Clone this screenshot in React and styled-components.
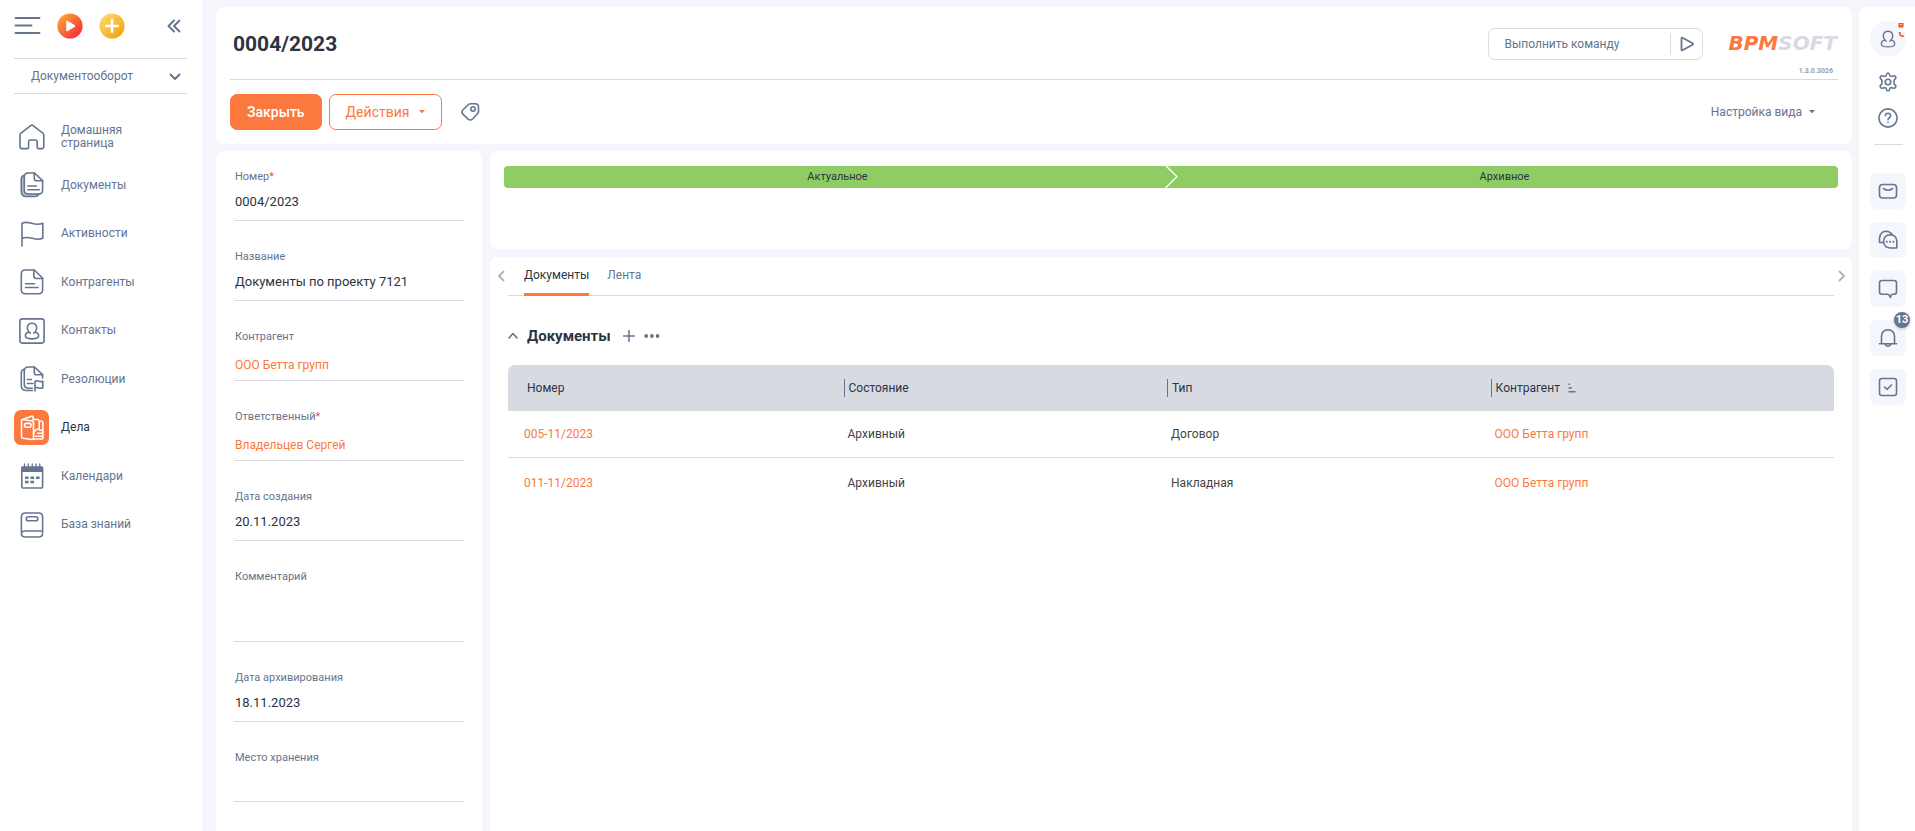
import { useState } from 'react';
import styled, { createGlobalStyle, css } from 'styled-components';

const colors = {
    page: '#f5f6fb',
    line: '#d8dae2',
    muted: '#66748f',
    text: '#2b3442',
    accent: '#fb793e',
    stage: '#8fcc63',
};

const GlobalStyle = createGlobalStyle`
    * {
        box-sizing: border-box;
    }
    body {
        margin: 0;
        background: ${colors.page};
        color: ${colors.text};
        font-family: Roboto, "Noto Sans", sans-serif;
        font-size: 12px;
        line-height: 16px;
    }
    button, input, select, textarea {
        margin: 0;
        padding: 0;
        border: 0;
        background: none;
        color: inherit;
        font: inherit;
    }
    button {
        cursor: pointer;
    }
    a {
        color: ${colors.accent};
        text-decoration: none;
    }
    svg {
        display: block;
        flex: none;
    }
`;

const Page = styled.div`
    display: flex;
    min-height: 100vh;
`;

/* ---------- left menu ---------- */

const Sidebar = styled.aside`
    flex: none;
    width: 202px;
    padding: 13px 15px 0 14px;
    background: #fff;
    color: ${colors.muted};
`;

const SidebarTop = styled.div`
    display: flex;
    align-items: center;
    gap: 16px;
    height: 26px;
    margin-bottom: 19px;

    button:last-child {
        margin-left: auto;
        margin-right: 6px;
    }
`;

const IconButton = styled.button`
    display: flex;
    align-items: center;
    justify-content: center;
    color: ${colors.muted};
`;

const Workplace = styled.label`
    position: relative;
    display: block;
    border-top: 1px solid ${colors.line};
    border-bottom: 1px solid ${colors.line};

    select {
        appearance: none;
        display: block;
        width: 100%;
        height: 34px;
        padding-left: 17px;
        outline: none;
    }
    svg {
        position: absolute;
        right: 6px;
        top: 14px;
        pointer-events: none;
    }
`;

const Menu = styled.nav`
    display: flex;
    flex-direction: column;
    justify-content: space-between;
    height: 423px;
    margin-top: 25px;
`;

const MenuLink = styled.a`
    display: flex;
    align-items: center;
    gap: 12px;
    height: 35px;
    color: ${({ $active }) => ($active ? colors.text : colors.muted)};
    line-height: 13px;
`;

const MenuIcon = styled.span`
    display: flex;
    align-items: center;
    justify-content: center;
    flex: none;
    width: 35px;
    height: 35px;
    border-radius: 7px;
    ${({ $active }) => $active && css`
        background: ${colors.accent};
        color: #fff;
    `}
`;

const MenuText = styled.span`
    max-width: 80px;
`;

/* ---------- content ---------- */

const Main = styled.main`
    display: flex;
    flex-direction: column;
    flex: 1;
    min-width: 0;
    gap: 7px;
    padding: 7px 7px 0 14px;
`;

const Panel = styled.section`
    background: #fff;
    border-radius: ${({ $toBottom }) => ($toBottom ? '7px 7px 0 0' : '7px')};
`;

const HeaderPanel = styled(Panel)`
    padding: 0 14px 14px;
`;

const HeaderTop = styled.div`
    display: flex;
    align-items: center;
    height: 73px;
    padding-top: 1px;
    border-bottom: 1px solid ${colors.line};
`;

const Title = styled.h1`
    flex: 1;
    margin: 0 0 0 3px;
    font-size: 21px;
    line-height: 28px;
    font-weight: 700;
`;

const Command = styled.div`
    display: flex;
    align-items: center;
    width: 215px;
    height: 32px;
    margin-right: 25px;
    border: 1px solid ${colors.line};
    border-radius: 7px;

    input {
        flex: 1;
        min-width: 0;
        height: 22px;
        padding-left: 15px;
        border-right: 1px solid ${colors.line};
        color: ${colors.muted};
        outline: none;
    }
    input::placeholder {
        color: ${colors.muted};
        opacity: 1;
    }
    button {
        width: 31px;
        height: 30px;
    }
`;

const Brand = styled.div`
    display: flex;
    flex-direction: column;
    align-items: flex-end;
    align-self: stretch;
    justify-content: flex-end;
    gap: 13px;
    padding-bottom: 3px;
`;

const Logo = styled.div`
    padding-right: 1px;
    color: ${colors.line};
    font: italic bold 20px/20px "DejaVu Sans", sans-serif;

    span {
        color: ${colors.accent};
    }
`;

const Version = styled.small`
    padding-right: 5px;
    color: #9a9eae;
    font-size: 7px;
    font-weight: 700;
    line-height: 10px;
`;

const Actions = styled.div`
    display: flex;
    align-items: center;
    gap: 7px;
    padding-top: 14px;
`;

const ActionButton = styled.button`
    display: flex;
    align-items: center;
    gap: 10px;
    height: 36px;
    padding: 0 16px;
    border: 1px solid ${colors.accent};
    border-radius: 7px;
    background: ${({ $primary }) => ($primary ? colors.accent : '#fff')};
    color: ${({ $primary }) => ($primary ? '#fff' : colors.accent)};
    font-size: 14px;
    font-weight: ${({ $primary }) => ($primary ? 500 : 400)};
`;

const TagButton = styled(IconButton)`
    width: 36px;
    height: 36px;
    margin-left: 3px;
`;

const ViewButton = styled.button`
    display: flex;
    align-items: center;
    gap: 7px;
    margin-left: auto;
    margin-right: 23px;
    color: ${colors.muted};
`;

const Columns = styled.div`
    display: flex;
    flex: 1;
    gap: 8px;
`;

const CardPanel = styled(Panel)`
    display: flex;
    flex-direction: column;
    flex: none;
    gap: 27px;
    width: 266px;
    padding: 17px 18px 28px;
`;

const Field = styled.div`
    display: flex;
    flex-direction: column;
    border-bottom: 1px solid ${colors.line};

    label, > span {
        padding-left: 1px;
        color: ${colors.muted};
        font-size: 11px;
        line-height: 18px;
    }
    sup {
        color: #f0533a;
        font-size: 11px;
        line-height: 1;
        vertical-align: baseline;
    }
    input {
        width: 100%;
        height: 34px;
        padding: 0 1px 4px;
        font-size: 13px;
        outline: none;
    }
    textarea {
        width: 100%;
        height: 55px;
        padding: 8px 1px;
        font-size: 13px;
        resize: none;
        outline: none;
    }
    a {
        height: 34px;
        padding: 11px 1px 0;
    }
`;

const Right = styled.div`
    display: flex;
    flex-direction: column;
    flex: 1;
    min-width: 0;
    gap: 8px;
`;

const StagePanel = styled(Panel)`
    min-height: 98px;
    padding: 15px 14px;
`;

const Stages = styled.ol`
    display: flex;
    margin: 0;
    padding: 0;
    overflow: hidden;
    border-radius: 4px;
    background: ${colors.stage};
    list-style: none;
`;

const Stage = styled.li`
    position: relative;
    flex: 1;
    font-size: 11px;
    line-height: 22px;
    text-align: center;

    /* arrow head lies over the border of two stages */
    svg {
        position: absolute;
        top: 0;
        right: -7px;
        z-index: 1;
    }
`;

const DetailPanel = styled(Panel)`
    flex: 1;
    padding-bottom: 24px;
`;

const TabsRow = styled.div`
    display: flex;
    align-items: flex-start;
    justify-content: space-between;

    > button {
        flex: none;
        width: 18px;
        height: 37px;
        color: #b4b4b8;
    }
    > button:first-child {
        padding-left: 4px;
    }
    > button:last-child {
        padding-right: 2px;
    }
`;

const Tabs = styled.div`
    display: flex;
    flex: 1;
    gap: 18px;
    height: 39px;
    padding-left: 16px;
    border-bottom: 1px solid ${colors.line};
`;

const Tab = styled.button`
    height: 39px;
    border-bottom: 3px solid ${({ $active }) => ($active ? colors.accent : 'transparent')};
    color: ${({ $active }) => ($active ? colors.text : colors.muted)};
`;

const Detail = styled.div`
    padding: 28px 18px 0;
`;

const DetailHead = styled.div`
    display: flex;
    align-items: center;
    height: 24px;
    margin-bottom: 17px;

    h2 {
        margin: 0 12px 0 9px;
        font-size: 15px;
        line-height: 24px;
        font-weight: 700;
    }
    button + button {
        margin-left: 9px;
    }
`;

const Table = styled.table`
    width: 100%;
    border-collapse: separate;
    border-spacing: 0;
    table-layout: fixed;

    col {
        width: 24.4%;
    }
    col:last-child {
        width: auto;
    }
    th {
        height: 46px;
        padding: 0 0 0 12px;
        background: ${colors.line};
        font-weight: 400;
        text-align: left;
    }
    th:first-child {
        padding-left: 14px;
        border-top-left-radius: 7px;
    }
    th:last-child {
        border-top-right-radius: 7px;
    }
    td {
        height: 50px;
        padding: 0 16px;
        color: #444;
    }
    tr:not(:last-child) td {
        height: 47px;
        border-bottom: 1px solid ${colors.line};
    }
    svg {
        color: ${colors.muted};
    }
`;

const HeadCell = styled.span`
    display: flex;
    align-items: center;
    gap: 8px;
    height: 18px;
    padding-left: 4px;
    border-left: 1px solid ${({ $first }) => ($first ? 'transparent' : colors.muted)};
`;

/* ---------- right communication panel ---------- */

const CommPanel = styled.aside`
    display: flex;
    flex-direction: column;
    align-items: center;
    flex: none;
    width: 56px;
    margin-top: 7px;
    padding: 14px 0 0 2px;
    border-top-left-radius: 7px;
    background: #fff;
`;

const Avatar = styled(IconButton)`
    position: relative;
    width: 36px;
    height: 36px;
    margin-bottom: 15px;
    border-radius: 50%;
    background: ${colors.page};
`;

const Status = styled.span`
    position: absolute;
    top: 2px;
    right: 2px;
`;

const CommTool = styled(IconButton)`
    height: 20px;
    margin-bottom: 16px;
`;

const CommLine = styled.hr`
    width: 29px;
    margin: 0 0 28px;
    border: 0;
    border-top: 1px solid ${colors.line};
`;

const CommList = styled.div`
    display: flex;
    flex-direction: column;
    gap: 13px;
`;

const CommButton = styled(IconButton)`
    position: relative;
    width: 36px;
    height: 36px;
    border-radius: 7px;
    background: ${colors.page};
`;

const Badge = styled.span`
    position: absolute;
    top: -8px;
    right: -4px;
    width: 16px;
    height: 16px;
    border-radius: 50%;
    background: ${colors.muted};
    box-shadow: 0 1px 3px #0000003a;
    color: #fff;
    font-size: 11px;
    font-weight: 700;
    line-height: 15px;
    text-align: center;
`;

/* ---------- icons ---------- */

const Svg = ({ w = 26, h = 26, sw = 1.6, children, ...rest }) => (
    <svg
        width={w}
        height={h}
        viewBox={`0 0 ${w} ${h}`}
        fill="none"
        stroke="currentColor"
        strokeWidth={sw}
        strokeLinecap="round"
        strokeLinejoin="round"
        aria-hidden="true"
        {...rest}
    >
        {children}
    </svg>
);

const Caret = () => (
    <Svg w={6} h={4} stroke="none" fill="currentColor">
        <path d="M0 0h6L3 3.2z" />
    </Svg>
);

const HomeIcon = () => (
    <Svg>
        <path d="M11.7 1.6a2 2 0 0 1 2.4 0l9.7 7.5q1 .8 1 2v11.500q0 2-2 2h-3.600q-1 0-1-1v-5.600q0-2-2-2h-4.600q-2 0-2 2v5.600q0 1-1 1H3q-2 0-2-2V11.100q0-1.200 1-2z" />
    </Svg>
);

const DocsIcon = () => (
    <Svg>
        <path d="M4.800 3.400Q2.400 4.400 2.400 7v12.500q0 5 5 5h8q3 0 4-2l-.8-1H9q-3.500 0-3.500-3.500V4z" fill="#b9c0cf" stroke="none" />
        <path d="M8 1h7.500L23.600 8.700V18q0 4-4 4H9.300q-4 0-4-4V5q0-4 4-4" />
        <path d="M15.300 1v5.500q0 2.300 2.300 2.300h6M5 3.300Q2.300 4.300 2.300 7v12.500q0 5 5 5h8.500q3 0 4-2.300M8.800 14h8.500M8.800 17.800h11.500" />
    </Svg>
);

const FlagIcon = () => (
    <Svg>
        <path d="M3 25V2.500q3-2 9.500-.3 6 2 11.300.1V17q-3.500 2.300-10.300.3Q7 15.700 3 17.300" />
    </Svg>
);

const DocIcon = () => (
    <Svg>
        <path d="M6.300 1h9l8.300 8v11.700q0 4-4 4H6.300q-4 0-4-4V5q0-4 4-4" />
        <path d="M14.800 1v5.800q0 2.700 2.700 2.700h6M6.500 14.700h9M6.500 18.500h12.500" />
    </Svg>
);

const Person = () => (
    <>
        <path d="M11.200 15.200C8.500 13 8 10.800 8.500 8.700 9 6.500 10.700 5.300 13 5.300s4 1.200 4.500 3.400c.5 2.100 0 4.300-2.700 6.500" />
        <path d="M9.500 14.200c-2 .6-3.300 2-3.100 4 .2 1.900 3.200 2.700 6.600 2.700s6.400-.8 6.600-2.700c.2-2-1.100-3.400-3.100-4" />
    </>
);

const ContactIcon = () => (
    <Svg>
        <rect x="0.900" y="0.900" width="24.200" height="24.200" rx="2.500" />
        <Person />
    </Svg>
);

const ResolutionIcon = () => (
    <Svg>
        <path d="M23.600 12V8.700L15.500 1H9.300q-4 0-4 4v13.500q0 3.500 4 3.700h4" />
        <path d="M15.300 1v5.500q0 2.300 2.300 2.300h6M5 3.300Q2.300 4.300 2.300 7v12.500q0 5 5 5h6M8.500 13.500h4M8.500 17.500h5.500" />
        <path d="M16 25v-9.800q2-1 4 0 2 .8 3.800 0v6.500q-1.800 1-3.800.2-2-.9-4 0" />
    </Svg>
);

const CaseIcon = () => (
    <Svg>
        <path d="M3.500 4.500 13 6q1.500.3 1.500 1.800V23q0 1.800-1.800 1.500L4 23.200q-1.500-.3-1.500-1.700V5.800q0-1.300 1-1.300z" />
        <path d="M4 4.300 12.500 1.200q1.700-.4 1.700 1.200V5M14.500 4.500h4q1.800.2 1.800 2v6.200q0 1.500-1.700 1.500-2.300 0-2.300 1.800M20.500 6h1.700q1.700.2 1.700 1.800v14.400q0 1.800-1.700 1.800h-7.500M15 16v2.500M20.500 15.200h3M18.500 18.200h5M16.500 21.200h7" />
        <rect x="5.500" y="8.400" width="6.500" height="3.800" rx="1.700" />
    </Svg>
);

const CalendarIcon = () => (
    <Svg>
        <rect x="2.800" y="4" width="20.800" height="21" rx="1" />
        <path d="M2.500 4h21.300v5H2.500z" fill="currentColor" stroke="none" />
        <path d="M5.500 1v3M9.300 1v3M13.200 1v3M17 1v3M20.800 1v3" strokeWidth="1.300" />
        <path d="M6 14.700h3.600M11.500 14.700h3.600M17 14.700h3.600M6 19h3.600M11.500 19h3.600" strokeWidth="2.600" strokeLinecap="butt" />
    </Svg>
);

const BookIcon = () => (
    <Svg>
        <path d="M23.600 20.500V5q0-4-4-4H6.400q-4 0-4 4v16.500q0 3.500 4 3.500h13.200q4 0 4-3.500M2.600 21q.6-2 3.400-2h17.500" />
        <rect x="7.300" y="4.800" width="11.500" height="4" rx="1.800" />
    </Svg>
);

const TagIcon = () => (
    <Svg w={20} h={20}>
        <path d="M8.500 2.500q1-.8 2.200-.8h4.300q3.500 0 3.500 3.500v4.200q0 1.200-.8 2.100l-4.900 5.300q-2.300 2.300-4.700.3l-5-4.800q-2.300-2.300 0-4.600z" />
        <circle cx="13" cy="7" r="2.200" />
    </Svg>
);

const GearIcon = () => (
    <Svg w={20} h={20}>
        <path d="M8.300 3q.2-2 1.700-2t1.700 2q.2 1.300 1.400 1.500l.9-.2q2.300-1.200 3.500.3.900 1.600-.9 2.900-.9.700-.6 1.600l.2.900-.2.900q-.3.900.6 1.600 1.800 1.300.9 2.900-1.200 1.500-3.500.3l-.9-.2q-1.200.2-1.400 1.500-.2 2-1.700 2t-1.700-2q-.2-1.300-1.400-1.500l-.9.200q-2.300 1.200-3.500-.3-.9-1.600.9-2.900.9-.7.6-1.600L3.800 10l.2-.9q.3-.9-.6-1.600-1.800-1.300-.9-2.900Q3.700 3.100 6 4.300l.9.200Q8.100 4.300 8.300 3z" />
        <circle cx="10" cy="10" r="2.800" />
    </Svg>
);

const HelpIcon = () => (
    <Svg w={20} h={20}>
        <circle cx="10" cy="10" r="9.100" />
        <path d="M7.300 7.700Q7.600 5.200 10 5.200t2.700 2.300q0 1.400-1.500 2.200Q10 10.400 10 11.700M10 14.300v.2" />
    </Svg>
);

const MailIcon = () => (
    <Svg w={20} h={20}>
        <rect x="1.500" y="3.500" width="17" height="13.500" rx="3" />
        <path d="M5.500 7.500q4.500 3.500 9 0" />
    </Svg>
);

const ChatIcon = () => (
    <Svg w={20} h={20}>
        <path d="M5 12.500H1.500V8.300Q2 1.500 8 1.200q4 .1 6 3" />
        <path d="M18.800 18V11q-.5-6-6.500-6.300Q6 5 5.500 11.300q.5 6.200 6.500 6.700z" />
        <path d="M8.700 11.700h.1M12 11.700h.1M15.300 11.700h.1" strokeWidth="1.900" />
    </Svg>
);

const MessageIcon = () => (
    <Svg w={20} h={20}>
        <path d="M4 1.500h12q2.500 0 2.500 2.500v8.700q0 2.500-2.500 2.500h-1.500q-1 0-1.300 1L12.300 18.500l-1-2.200q-.5-1.100-1.600-1.100H4q-2.500 0-2.500-2.500V4Q1.500 1.500 4 1.500z" />
    </Svg>
);

const BellIcon = () => (
    <Svg w={20} h={20}>
        <path d="M1.500 15.700h17M3.500 15.500V8Q4 2 10 1.700 16 2 16.500 8v7.500M7 16q3 4.500 6 0" />
    </Svg>
);

const TaskIcon = () => (
    <Svg w={20} h={20}>
        <rect x="1.500" y="1.500" width="17" height="17" rx="2.500" />
        <path d="m6.500 10 2.700 2.300L13.500 8" />
    </Svg>
);

/* ---------- data ---------- */

const menu = [
    { title: 'Домашняя страница', Icon: HomeIcon },
    { title: 'Документы', Icon: DocsIcon },
    { title: 'Активности', Icon: FlagIcon },
    { title: 'Контрагенты', Icon: DocIcon },
    { title: 'Контакты', Icon: ContactIcon },
    { title: 'Резолюции', Icon: ResolutionIcon },
    { title: 'Дела', Icon: CaseIcon, active: true },
    { title: 'Календари', Icon: CalendarIcon },
    { title: 'База знаний', Icon: BookIcon },
];

const fields = [
    { id: 'number', label: 'Номер', value: '0004/2023', required: true },
    { id: 'name', label: 'Название', value: 'Документы по проекту 7121' },
    { id: 'account', label: 'Контрагент', value: 'ООО Бетта групп', type: 'link' },
    { id: 'owner', label: 'Ответственный', value: 'Владельцев Сергей', type: 'link', required: true },
    { id: 'created', label: 'Дата создания', value: '20.11.2023' },
    { id: 'comment', label: 'Комментарий', value: '', type: 'area' },
    { id: 'archived', label: 'Дата архивирования', value: '18.11.2023' },
    { id: 'place', label: 'Место хранения', value: '' },
];

const documents = [
    { number: '005-11/2023', state: 'Архивный', type: 'Договор', account: 'ООО Бетта групп' },
    { number: '011-11/2023', state: 'Архивный', type: 'Накладная', account: 'ООО Бетта групп' },
];

const comm = [
    { title: 'Почта', Icon: MailIcon },
    { title: 'Чаты', Icon: ChatIcon },
    { title: 'Сообщения', Icon: MessageIcon },
    { title: 'Уведомления', Icon: BellIcon, count: 13 },
    { title: 'Задачи', Icon: TaskIcon },
];

const CardField = ({ id, label, value, type, required }) => {
    const mark = required && <sup>*</sup>;
    if (type === 'link') {
        return (
            <Field>
                <span id={id}>{label}{mark}</span>
                <a href="#" aria-describedby={id}>{value}</a>
            </Field>
        );
    }
    return (
        <Field>
            <label htmlFor={id}>{label}{mark}</label>
            {type === 'area'
                ? <textarea id={id} defaultValue={value} />
                : <input id={id} defaultValue={value} />}
        </Field>
    );
};

const App = () => {
    const [tab, setTab] = useState('Документы');

    return (
        <>
            <GlobalStyle />
            <Page>
                <Sidebar>
                    <SidebarTop>
                        <IconButton aria-label="Меню">
                            <Svg w={27} h={20} sw={1.8}>
                                <path d="M1.500 2h24M1.500 9.500h16M1.500 17h24" />
                            </Svg>
                        </IconButton>
                        <IconButton aria-label="Запустить процесс">
                            <Svg stroke="none">
                                <defs>
                                    <linearGradient id="run" x1="0" y1="0" x2="1" y2="1">
                                        <stop offset="0.100" stopColor="#f9a736" />
                                        <stop offset="0.850" stopColor="#f9313a" />
                                    </linearGradient>
                                </defs>
                                <circle cx="13" cy="13" r="12.600" fill="url(#run)" />
                                <path d="M10 8.500v9l7.500-4.500z" fill="#fff" stroke="#fff" />
                            </Svg>
                        </IconButton>
                        <IconButton aria-label="Добавить">
                            <Svg>
                                <defs>
                                    <linearGradient id="add" x1="0" y1="0" x2="1" y2="1">
                                        <stop offset="0.100" stopColor="#fbd973" />
                                        <stop offset="0.850" stopColor="#f4a60d" />
                                    </linearGradient>
                                </defs>
                                <circle cx="13" cy="13" r="12.600" fill="url(#add)" stroke="none" />
                                <path d="M13 7.300v11.400M7.300 13h11.400" stroke="#fff" strokeWidth="2.600" />
                            </Svg>
                        </IconButton>
                        <IconButton aria-label="Свернуть">
                            <Svg w={14} h={14} sw={1.9}>
                                <path d="M7 1.500 1.500 7 7 12.500M12.500 1.500 7 7l5.500 5.500" />
                            </Svg>
                        </IconButton>
                    </SidebarTop>
                    <Workplace aria-label="Рабочее место">
                        <select>
                            <option>Документооборот</option>
                        </select>
                        <Svg w={12} h={8} sw={2}>
                            <path d="M1.500 1.500 6 6l4.500-4.500" />
                        </Svg>
                    </Workplace>
                    <Menu>
                        {menu.map(({ title, Icon, active }) => (
                            <MenuLink key={title} href="#" $active={active}>
                                <MenuIcon $active={active}><Icon /></MenuIcon>
                                <MenuText>{title}</MenuText>
                            </MenuLink>
                        ))}
                    </Menu>
                </Sidebar>

                <Main>
                    <HeaderPanel>
                        <HeaderTop>
                            <Title>0004/2023</Title>
                            <Command>
                                <input aria-label="Выполнить команду" placeholder="Выполнить команду" />
                                <IconButton aria-label="Выполнить">
                                    <Svg w={16} h={16} sw={1.8}>
                                        <path d="M2.500 2.300v11.400q0 1 1 .6l10-5.500q1-.8 0-1.600l-10-5.500q-1-.4-1 .6z" />
                                    </Svg>
                                </IconButton>
                            </Command>
                            <Brand>
                                <Logo><span>BPM</span>SOFT</Logo>
                                <Version>1.3.0.3026</Version>
                            </Brand>
                        </HeaderTop>
                        <Actions>
                            <ActionButton $primary>Закрыть</ActionButton>
                            <ActionButton>Действия<Caret /></ActionButton>
                            <TagButton aria-label="Теги"><TagIcon /></TagButton>
                            <ViewButton>Настройка вида<Caret /></ViewButton>
                        </Actions>
                    </HeaderPanel>

                    <Columns>
                        <CardPanel $toBottom>
                            {fields.map((field) => <CardField key={field.id} {...field} />)}
                        </CardPanel>

                        <Right>
                            <StagePanel>
                                <Stages>
                                    <Stage>
                                        Актуальное
                                        <Svg w={13} h={22} stroke="#fff" sw={1.4}>
                                            <path d="M1 0l11 10.500L1 21.500" />
                                        </Svg>
                                    </Stage>
                                    <Stage>Архивное</Stage>
                                </Stages>
                            </StagePanel>

                            <DetailPanel $toBottom>
                                <TabsRow>
                                    <IconButton aria-label="Назад">
                                        <Svg w={8} h={12} sw={1.9}><path d="M6.500 1.500 2 6l4.500 4.500" /></Svg>
                                    </IconButton>
                                    <Tabs role="tablist">
                                        {['Документы', 'Лента'].map((name) => (
                                            <Tab
                                                key={name}
                                                role="tab"
                                                aria-selected={tab === name}
                                                $active={tab === name}
                                                onClick={() => setTab(name)}
                                            >
                                                {name}
                                            </Tab>
                                        ))}
                                    </Tabs>
                                    <IconButton aria-label="Вперёд">
                                        <Svg w={8} h={12} sw={1.9}><path d="M1.500 1.500 6 6l-4.500 4.500" /></Svg>
                                    </IconButton>
                                </TabsRow>

                                <Detail>
                                    <DetailHead>
                                        <IconButton aria-label="Свернуть">
                                            <Svg w={10} h={8}><path d="M1 6l4-4.500L9 6" /></Svg>
                                        </IconButton>
                                        <h2>Документы</h2>
                                        <IconButton aria-label="Добавить документ">
                                            <Svg w={12} h={12} sw={1.500}><path d="M6 .5v11M.5 6h11" /></Svg>
                                        </IconButton>
                                        <IconButton aria-label="Ещё">
                                            <Svg w={16} h={6} stroke="none" fill="currentColor">
                                                <circle cx="2.200" cy="3" r="1.900" />
                                                <circle cx="7.900" cy="3" r="1.900" />
                                                <circle cx="13.600" cy="3" r="1.900" />
                                            </Svg>
                                        </IconButton>
                                    </DetailHead>
                                    <Table>
                                        <colgroup><col /><col /><col /><col /></colgroup>
                                        <thead>
                                            <tr>
                                                <th><HeadCell $first>Номер</HeadCell></th>
                                                <th><HeadCell>Состояние</HeadCell></th>
                                                <th><HeadCell>Тип</HeadCell></th>
                                                <th>
                                                    <HeadCell>
                                                        Контрагент
                                                        <Svg w={8} h={10} strokeLinecap="butt">
                                                            <path d="M.5 1.300h1.500M.5 5h3.500M.5 8.700h7" />
                                                        </Svg>
                                                    </HeadCell>
                                                </th>
                                            </tr>
                                        </thead>
                                        <tbody>
                                            {documents.map((doc) => (
                                                <tr key={doc.number}>
                                                    <td><a href="#">{doc.number}</a></td>
                                                    <td>{doc.state}</td>
                                                    <td>{doc.type}</td>
                                                    <td><a href="#">{doc.account}</a></td>
                                                </tr>
                                            ))}
                                        </tbody>
                                    </Table>
                                </Detail>
                            </DetailPanel>
                        </Right>
                    </Columns>
                </Main>

                <CommPanel>
                    <Avatar aria-label="Профиль">
                        <Svg sw={1.400}><Person /></Svg>
                        <Status>
                            <Svg w={6} h={15} stroke="none" fill="#f4511e">
                                <path fillRule="evenodd" d="M.5 0h5v4.500h-5zM1.700 1.300 3 2.500l1.300-1.200zM1 9h1.500v2L4 12.500h1.800V14H4Q1 13 .7 10z" />
                            </Svg>
                        </Status>
                    </Avatar>
                    <CommTool aria-label="Настройки"><GearIcon /></CommTool>
                    <CommTool aria-label="Справка"><HelpIcon /></CommTool>
                    <CommLine />
                    <CommList>
                        {comm.map(({ title, Icon, count }) => (
                            <CommButton key={title} aria-label={title}>
                                <Icon />
                                {count && <Badge>{count}</Badge>}
                            </CommButton>
                        ))}
                    </CommList>
                </CommPanel>
            </Page>
        </>
    );
};

export default App;
